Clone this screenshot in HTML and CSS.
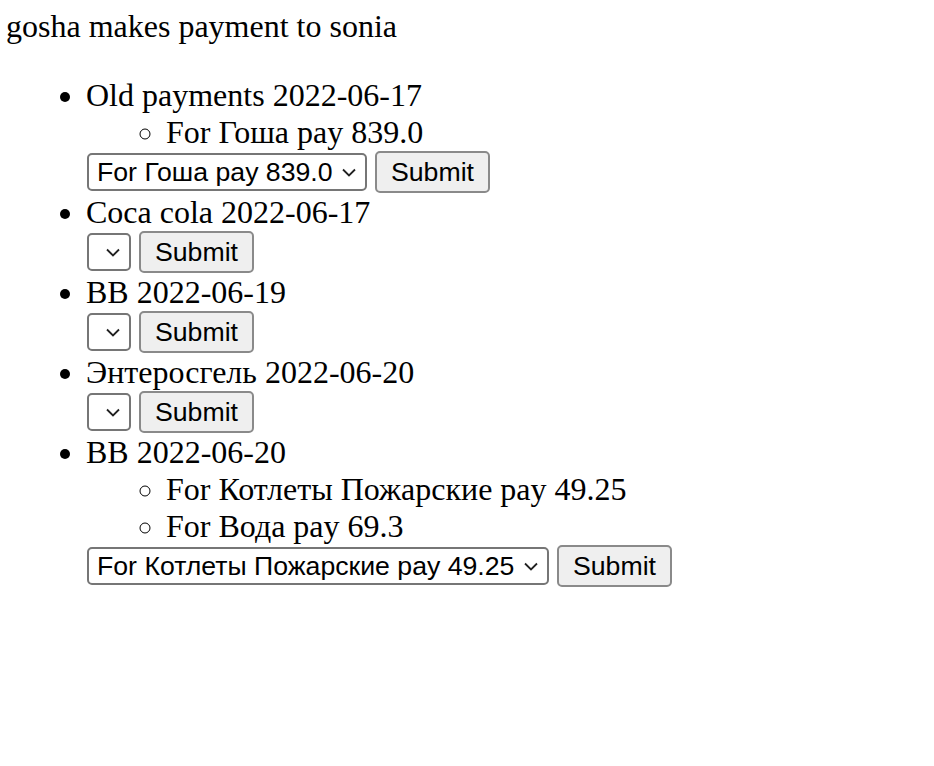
FILE: index.html
```html
<!DOCTYPE html>
<html>
<head>
<meta charset="utf-8">
<title>Payments</title>
<link rel="stylesheet" href="styles.css">
</head>
<body>
<div class="title">gosha makes payment to sonia</div>
<ul class="payments">
  <li>Old payments 2022-06-17
    <ul class="items">
      <li>For Гоша pay 839.0</li>
    </ul>
    <form class="pay-form">
      <select class="pay-select"><option>For Гоша pay 839.0</option></select>
      <button type="button" class="pay-btn">Submit</button>
    </form>
  </li>
  <li>Coca cola 2022-06-17
    <form class="pay-form">
      <select class="pay-select"></select>
      <button type="button" class="pay-btn">Submit</button>
    </form>
  </li>
  <li>BB 2022-06-19
    <form class="pay-form">
      <select class="pay-select"></select>
      <button type="button" class="pay-btn">Submit</button>
    </form>
  </li>
  <li>Энтеросгель 2022-06-20
    <form class="pay-form">
      <select class="pay-select"></select>
      <button type="button" class="pay-btn">Submit</button>
    </form>
  </li>
  <li>BB 2022-06-20
    <ul class="items">
      <li>For Котлеты Пожарские pay 49.25</li>
      <li>For Вода pay 69.3</li>
    </ul>
    <form class="pay-form">
      <select class="pay-select"><option>For Котлеты Пожарские pay 49.25</option><option>For Вода pay 69.3</option></select>
      <button type="button" class="pay-btn">Submit</button>
    </form>
  </li>
</ul>
</body>
</html>
```
FILE: styles.css
```css
html {
  background: #fff;
}
body {
  margin: 8px 6px;
  font-family: "Liberation Serif", "Times New Roman", serif;
  font-size: 32px;
  line-height: 37px;
  color: #000;
}
.title {
  margin: 0;
}
.payments {
  margin: 32px 0;
  padding-left: 80px;
  list-style: disc;
}
.items {
  margin: 0;
  padding-left: 80px;
  list-style: circle;
}
.pay-form {
  display: flex;
  align-items: flex-start;
  gap: 8px;
  margin: 0;
  height: 43px;
}
.pay-select {
  -webkit-appearance: none;
  appearance: none;
  box-sizing: border-box;
  height: 38px;
  min-width: 43px;
  margin: 2px 0 0 1px;
  padding: 0 32px 0 8px;
  border: 2px solid #767676;
  border-radius: 5px;
  background-color: #fff;
  background-image: url("data:image/svg+xml;utf8,<svg xmlns='http://www.w3.org/2000/svg' width='14' height='9' viewBox='0 0 14 9'><path d='M1 1.5 L7 7.5 L13 1.5' fill='none' stroke='%23222' stroke-width='1.8'/></svg>");
  background-repeat: no-repeat;
  background-position: right 9px center;
  background-size: 14px 9px;
  font-family: "Liberation Sans", Arial, sans-serif;
  font-size: 26.67px;
  line-height: 34px;
  color: #000;
}
.pay-btn {
  box-sizing: border-box;
  height: 42px;
  margin: 0;
  padding: 0 14px;
  border: 2px solid #8a8a8a;
  border-radius: 5px;
  background: #efefef;
  font-family: "Liberation Sans", Arial, sans-serif;
  font-size: 26.67px;
  color: #000;
}
```
